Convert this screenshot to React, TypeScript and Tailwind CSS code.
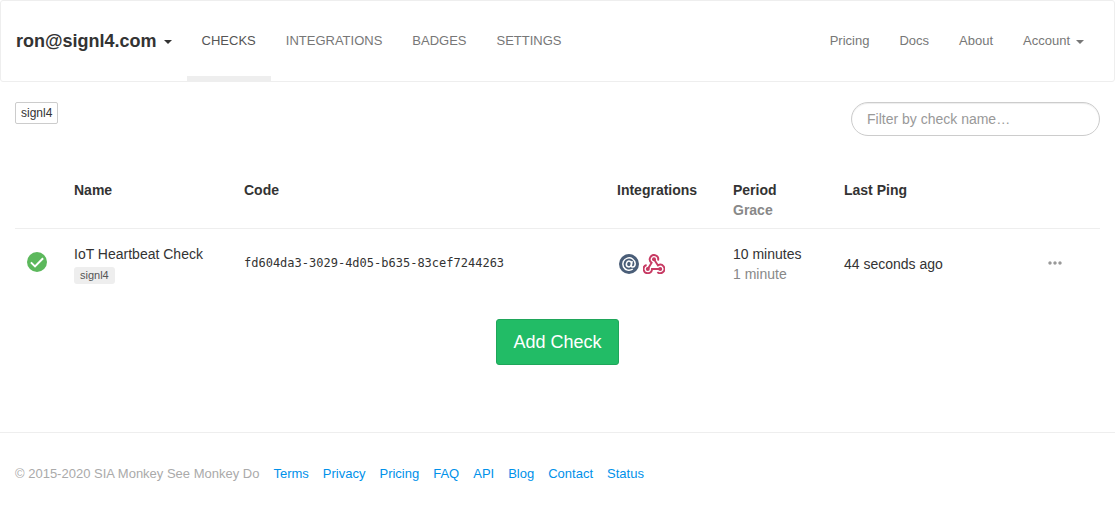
import { MdMoreHoriz } from "react-icons/md";

const navItems = ["Checks", "Integrations", "Badges", "Settings"];
const sideItems = ["Pricing", "Docs", "About"];
const footerItems = ["Terms", "Privacy", "Pricing", "FAQ", "API", "Blog", "Contact", "Status"];

function Caret() {
  return (
    <svg viewBox="0 0 8 4" className="mt-0.5 h-1 w-2 fill-current" aria-hidden="true">
      <path d="M0 0h8L4 4z" />
    </svg>
  );
}

function UpIcon() {
  return (
    <svg viewBox="0 0 20 20" className="size-5" role="img" aria-label="Up">
      <circle cx="10" cy="10" r="10" fill="#5cb85c" />
      <path d="M3.9 10.4L8 14.4L16.1 6.2" fill="none" stroke="#fff" strokeWidth="2" />
    </svg>
  );
}

function EmailIcon() {
  return (
    <svg viewBox="0 0 20 20" className="size-5" role="img" aria-label="Email">
      <circle cx="10" cy="10" r="10" fill="#4a5e78" />
      <g fill="none" stroke="#fff" strokeWidth="1.5">
        <path d="M13.8 15A6.2 6.2 0 1 1 16.2 9.6C16.2 11.8 15.2 13 13.8 13C12.6 13 12.2 12.2 12.4 11.2L13.1 7" />
        <ellipse cx="9.9" cy="10" rx="2.5" ry="2.9" transform="rotate(15 9.9 10)" />
      </g>
    </svg>
  );
}

function WebhookIcon() {
  return (
    <svg viewBox="0 0 22 20" className="h-5 w-[22px] text-[#c73a63]" role="img" aria-label="Webhook">
      <g fill="none" stroke="currentColor" strokeWidth="1.9">
        <path d="M15 6.5A4.2 4.2 0 1 0 8.6 8.7L4.8 15" />
        <path d="M11 5.2L15 11.4A4.2 4.2 0 1 1 14.4 18.1" />
        <path d="M3.6 11A4.2 4.2 0 1 0 9 15H17.2" />
      </g>
      <g fill="currentColor">
        <circle cx="11" cy="5.2" r="2" />
        <circle cx="4.8" cy="15" r="2" />
        <circle cx="17.2" cy="15" r="2" />
      </g>
    </svg>
  );
}

function Header() {
  return (
    <header className="flex h-[82px] items-stretch justify-between rounded-[3px] border border-[#eee] pr-[15px] text-[13px] text-[#777]">
      <div className="flex">
        <button type="button" className="flex items-center gap-[7px] px-[15px] text-lg font-bold text-[#333]">
          ron@signl4.com
          <Caret />
        </button>
        <nav className="flex uppercase">
          {navItems.map((item, i) => (
            <a
              key={item}
              href="#"
              className={
                i === 0
                  ? "flex items-center border-b-[5px] border-[#eee] px-[15px] pt-[5px] text-[#555]"
                  : "flex items-center px-[15px]"
              }
            >
              {item}
            </a>
          ))}
        </nav>
      </div>
      <nav className="flex">
        {sideItems.map((item) => (
          <a key={item} href="#" className="flex items-center px-[15px]">
            {item}
          </a>
        ))}
        <button type="button" className="flex items-center gap-1.5 px-[15px]">
          Account
          <Caret />
        </button>
      </nav>
    </header>
  );
}

function ChecksTable() {
  return (
    <table className="mt-9 w-full table-fixed border-collapse text-left text-sm leading-5">
      <colgroup>
        <col className="w-[51px]" />
        <col className="w-[170px]" />
        <col />
        <col className="w-[116px]" />
        <col className="w-[111px]" />
        <col className="w-[174px]" />
        <col className="w-[90px]" />
      </colgroup>
      <thead>
        <tr className="border-b border-[#eee] align-top">
          <td />
          <th className="p-2">Name</th>
          <th className="p-2">Code</th>
          <th className="p-2">Integrations</th>
          <th className="p-2">
            Period
            <div className="text-[#888]">Grace</div>
          </th>
          <th className="p-2">Last Ping</th>
          <td />
        </tr>
      </thead>
      <tbody>
        <tr className="h-[70px]">
          <td className="px-3 pb-1">
            <UpIcon />
          </td>
          <td className="px-2">
            IoT Heartbeat Check
            <div className="mt-[3px] w-fit rounded-[3px] bg-[#eee] px-1.5 text-[11px] leading-[17px] text-[#555]">signl4</div>
          </td>
          <td className="px-2 pb-0.5 font-['DejaVu_Sans_Mono',monospace] text-xs">
            fd604da3-3029-4d05-b635-83cef7244263
          </td>
          <td className="px-2">
            <div className="flex items-center gap-1 pl-0.5">
              <EmailIcon />
              <WebhookIcon />
            </div>
          </td>
          <td className="px-2">
            10 minutes
            <div className="text-[#888]">1 minute</div>
          </td>
          <td className="px-2">44 seconds ago</td>
          <td className="pb-0.5 text-center">
            <button type="button" aria-label="Details" className="align-middle text-[#999]">
              <MdMoreHoriz className="size-5" />
            </button>
          </td>
        </tr>
      </tbody>
    </table>
  );
}

export default function App() {
  return (
    <div className="bg-white font-['Liberation_Sans',Arial,sans-serif] text-[#333]">
      <Header />
      <main className="px-[15px] pt-5">
        <div className="flex items-start justify-between">
          <button type="button" className="rounded-[2px] border border-[#ccc] px-[5px] text-xs leading-5">
            signl4
          </button>
          <input
            type="text"
            aria-label="Filter by check name"
            placeholder="Filter by check name…"
            className="h-[34px] w-[249px] rounded-full border border-[#ccc] px-[15px] text-sm shadow-[inset_0_1px_1px_rgba(0,0,0,0.075)] placeholder:text-[#999]"
          />
        </div>
        <ChecksTable />
        <div className="mt-5 flex justify-center">
          <button
            type="button"
            className="rounded-[3px] border border-[#1fa65a] bg-[#22bc66] px-4 py-[10px] text-lg leading-6 text-white"
          >
            Add Check
          </button>
        </div>
      </main>
      <footer className="mt-[67px] flex flex-wrap gap-x-[14px] border-t border-[#eee] px-[15px] py-[31px] text-[13px] leading-[19px]">
        <span className="text-[#aaa]">© 2015-2020 SIA Monkey See Monkey Do</span>
        {footerItems.map((item) => (
          <a key={item} href="#" className="text-[#0091ea]">
            {item}
          </a>
        ))}
      </footer>
    </div>
  );
}
